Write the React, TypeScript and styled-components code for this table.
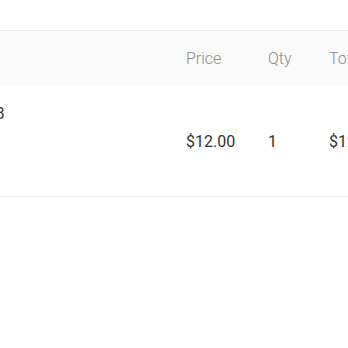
import * as React from "react";
import styled, { createGlobalStyle } from "styled-components";

type LineItem = {
  id: string;
  name: string;
  price: number;
  qty: number;
};

const items: LineItem[] = [{ id: "a1", name: "Size: 8", price: 12, qty: 1 }];

const money = (v: number) => `$${v.toFixed(2)}`;

const GlobalStyle = createGlobalStyle`
  html, body {
    margin: 0;
    padding: 0;
    background: #ffffff;
    overflow: hidden;
  }
  body {
    font-family: Roboto, "Noto Sans", sans-serif;
  }
`;

/* the cart table is wider than the window, it's scrolled a bit to the right */
const CartWrap = styled.div`
  padding-top: 30px;
  margin-left: -58px;
  width: 560px;
`;

const CartTable = styled.table`
  width: 100%;
  border-collapse: collapse;
  table-layout: fixed;
`;

const HeadRow = styled.tr`
  background-color: #fafafa;
  border-top: 1px solid #ececec;
`;

const HeadCell = styled.th<{ $width: number }>`
  width: ${({ $width }) => $width}px;
  height: 55px;
  padding: 0 0 0 16px;
  text-align: left;
  font-weight: 300;
  font-size: 16px;
  color: #8c8c8c;
  box-sizing: border-box;
`;

const BodyRow = styled.tr`
  border-bottom: 1px solid #efefef;
`;

const Cell = styled.td<{ $top?: boolean }>`
  height: 111px;
  padding: ${({ $top }) => ($top ? "17px 0 0 16px" : "2px 0 0 16px")};
  vertical-align: ${({ $top }) => ($top ? "top" : "middle")};
  font-size: 16px;
  line-height: 22px;
  color: #333333;
  white-space: nowrap;
  box-sizing: border-box;
`;

export default function App() {
  return (
    <>
      <GlobalStyle />
      <CartWrap>
        <CartTable>
          <thead>
            <HeadRow>
              <HeadCell $width={228}></HeadCell>
              <HeadCell $width={82}>Price</HeadCell>
              <HeadCell $width={61}>Qty</HeadCell>
              <HeadCell $width={189}>Total</HeadCell>
            </HeadRow>
          </thead>
          <tbody>
            {items.map((item) => (
              <BodyRow key={item.id}>
                <Cell $top>{item.name}</Cell>
                <Cell>{money(item.price)}</Cell>
                <Cell>{item.qty}</Cell>
                <Cell>{money(item.price * item.qty)}</Cell>
              </BodyRow>
            ))}
          </tbody>
        </CartTable>
      </CartWrap>
    </>
  );
}
